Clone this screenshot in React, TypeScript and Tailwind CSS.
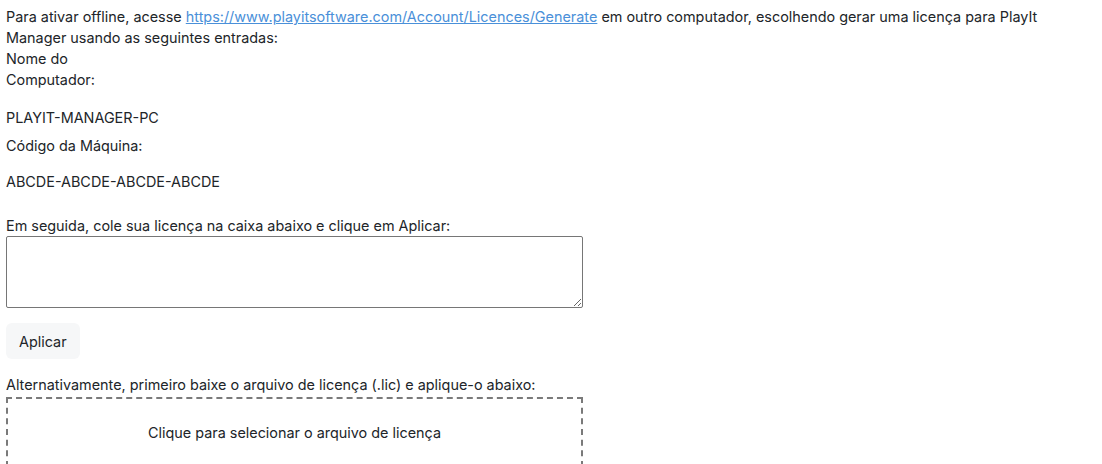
export default function App() {
  return (
    <div className="min-h-screen bg-white px-[6px] pt-[6px] font-['Inter',sans-serif] text-[14.4px] leading-[21px] text-[#212529]">
      <p>
        Para ativar offline, acesse{' '}
        <a href="#" className="text-[#4a90d9] underline">
          https://www.playitsoftware.com/Account/Licences/Generate
        </a>{' '}
        em outro computador, escolhendo gerar uma licença para PlayIt Manager usando as seguintes entradas:
      </p>
      <div>
        Nome do
        <br />
        Computador:
      </div>
      <p className="mt-[17px]">PLAYIT-MANAGER-PC</p>
      <p className="mt-[7px]">Código da Máquina:</p>
      <p className="mt-[15px]">ABCDE-ABCDE-ABCDE-ABCDE</p>
      <p className="mt-[23px]">Em seguida, cole sua licença na caixa abaixo e clique em Aplicar:</p>
      <textarea className="block h-[72px] w-[577px] rounded-[2px] border border-[#767676] p-1 outline-none" />
      <button className="mt-[15px] block h-[36px] rounded-[6px] bg-[#f6f7f8] px-[13px] text-[14.4px] text-[#212529]">
        Aplicar
      </button>
      <p className="mt-[15px]">Alternativamente, primeiro baixe o arquivo de licença (.lic) e aplique-o abaixo:</p>
      <div className="mt-[2px] flex h-[70px] w-[577px] items-center justify-center border-2 border-dashed border-[#7a7a7a]">
        Clique para selecionar o arquivo de licença
      </div>
    </div>
  )
}
